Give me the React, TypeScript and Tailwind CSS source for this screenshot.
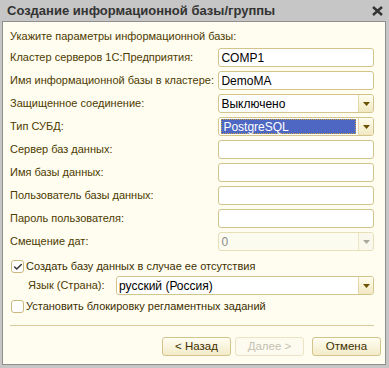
import { Check } from 'lucide-react';

const font = { fontFamily: '"Liberation Sans", Arial, sans-serif' };

function Arrow({ disabled }: { disabled?: boolean }) {
  return (
    <div
      className={`flex w-[15px] shrink-0 items-center justify-center border-l ${
        disabled ? 'border-[#ece6c4] bg-[#faf8ec]' : 'border-[#e3d7a6] bg-gradient-to-b from-[#fffdf0] to-[#f1e8c2]'
      }`}
    >
      <svg width="7" height="4" viewBox="0 0 7 4">
        <path d="M0 0H7L3.5 4Z" fill={disabled ? '#a9a69a' : '#6b5200'} />
      </svg>
    </div>
  );
}

function Field({
  value,
  select,
  selected,
  disabled,
  className = 'w-[156px]',
}: {
  value?: string;
  select?: boolean;
  selected?: boolean;
  disabled?: boolean;
  className?: string;
}) {
  return (
    <div
      className={`flex h-[19px] overflow-hidden rounded-[3px] border ${className} ${
        disabled ? 'border-[#e6dfb8] bg-[#fcfbf0]' : 'border-[#d3c48c] bg-white'
      }`}
    >
      <div className="flex flex-1 items-center px-[2px]">
        {selected ? (
          <span className="flex h-[15px] flex-1 items-center border border-dotted border-[#c9a640] bg-[#4e67c2] pl-[1px] text-[12px] text-white">
            {value}
          </span>
        ) : (
          <span className={`text-[12px] ${disabled ? 'text-[#8a8a8a]' : 'text-black'}`}>{value}</span>
        )}
      </div>
      {select && <Arrow disabled={disabled} />}
    </div>
  );
}

function Row({ label, children }: { label: string; children: React.ReactNode }) {
  return (
    <div className="flex h-[19px] items-center">
      <span className="w-[209px] whitespace-nowrap text-[11px] text-[#4d3b00]">{label}</span>
      {children}
    </div>
  );
}

function Box({ checked }: { checked?: boolean }) {
  return (
    <span className="flex h-[13px] w-[13px] items-center justify-center rounded-[3px] border border-[#c9b97e] bg-white">
      {checked && <Check className="h-[10px] w-[10px] text-[#333]" strokeWidth={3.5} />}
    </span>
  );
}

function Btn({ children, disabled }: { children: React.ReactNode; disabled?: boolean }) {
  return (
    <div
      className={`flex h-[19px] w-[69px] items-center justify-center rounded-[3px] border text-[11.5px] ${
        disabled
          ? 'border-[#ebe3c3] bg-[#fdfbf0] text-[#c4c0b0]'
          : 'border-[#d3c48c] bg-gradient-to-b from-[#fffdf2] to-[#f3ebc8] text-[#3d3000]'
      }`}
    >
      {children}
    </div>
  );
}

export default function App() {
  return (
    <div className="flex h-[368px] w-[389px] flex-col bg-[#c6c6c6]" style={font}>
      <div className="flex h-[21px] shrink-0 items-center justify-between pl-[7px] pr-[6px]">
        <span className="text-[13px] font-bold text-[#333]">Создание информационной базы/группы</span>
        <svg width="11" height="10" viewBox="0 0 11 10">
          <path d="M1 1L10 9M10 1L1 9" stroke="#333" strokeWidth="2.4" />
        </svg>
      </div>
      <div className="mb-[3px] ml-[2px] mr-[3px] flex flex-1 flex-col border border-[#8f8f8f] bg-[#fffdf0] pl-[7px] pr-[11px]">
        <div className="mt-[7px] h-[14px] text-[11px] leading-[14px] text-[#4d3b00]">
          Укажите параметры информационной базы:
        </div>
        <div className="mt-[5px] flex flex-col gap-[4px]">
          <Row label="Кластер серверов 1С:Предприятия:">
            <Field value="COMP1" />
          </Row>
          <Row label="Имя информационной базы в кластере:">
            <Field value="DemoMA" />
          </Row>
          <Row label="Защищенное соединение:">
            <Field value="Выключено" select />
          </Row>
          <Row label="Тип СУБД:">
            <Field value="PostgreSQL" select selected />
          </Row>
          <Row label="Сервер баз данных:">
            <Field />
          </Row>
          <Row label="Имя базы данных:">
            <Field />
          </Row>
          <Row label="Пользователь базы данных:">
            <Field />
          </Row>
          <Row label="Пароль пользователя:">
            <Field />
          </Row>
          <Row label="Смещение дат:">
            <Field value="0" select disabled />
          </Row>
        </div>
        <div className="mt-[8px] flex h-[15px] items-center gap-[2px] pl-[1px]">
          <Box checked />
          <span className="text-[11px] text-[#3d3000]">Создать базу данных в случае ее отсутствия</span>
        </div>
        <div className="mt-[2px] flex h-[19px] items-center pl-[18px]">
          <span className="w-[88px] text-[11px] text-[#4d3b00]">Язык (Страна):</span>
          <Field value="русский (Россия)" select className="flex-1" />
        </div>
        <div className="mt-[4px] flex h-[15px] items-center gap-[2px] pl-[1px]">
          <Box />
          <span className="text-[11px] text-[#3d3000]">Установить блокировку регламентных заданий</span>
        </div>
        <div className="mt-[11px] h-px bg-[#d9cc9c]" />
        <div className="-mr-[7px] mt-[11px] flex justify-end gap-[4px]">
          <Btn>&lt; Назад</Btn>
          <Btn disabled>Далее &gt;</Btn>
          <div className="ml-[4px]">
            <Btn>Отмена</Btn>
          </div>
        </div>
      </div>
    </div>
  );
}
